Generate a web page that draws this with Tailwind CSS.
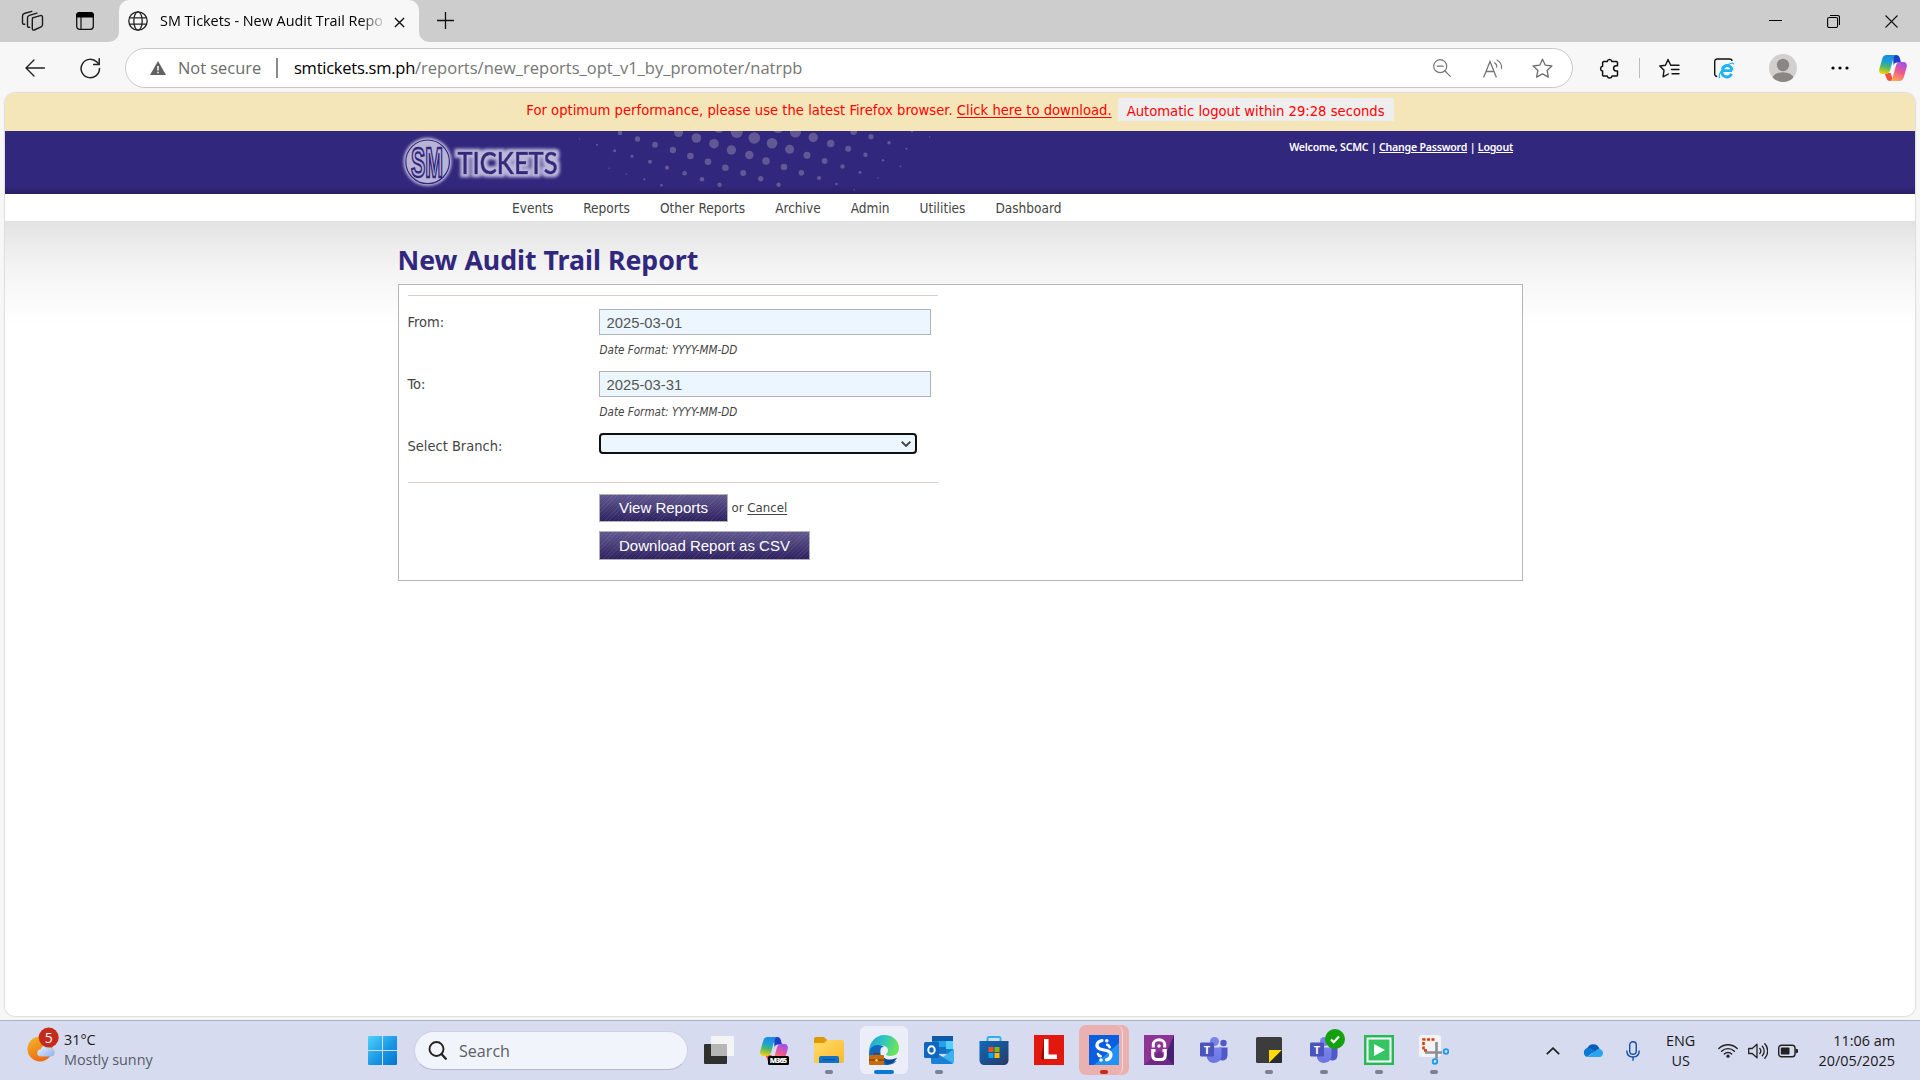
<!DOCTYPE html>
<html lang="en">
<head>
<meta charset="utf-8">
<title>SM Tickets - New Audit Trail Report</title>
<script src="https://cdn.jsdelivr.net/npm/@tailwindcss/browser@4"></script>
</head>
<body class="flex h-[1080px] w-[1920px] flex-col overflow-hidden bg-[#f7f7f7] font-['Open_Sans',sans-serif] text-black">

<svg class="absolute size-0" aria-hidden="true">
  <defs>
    <linearGradient id="cpA" x1="0.5" y1="0" x2="0.3" y2="1"><stop offset="0" stop-color="#1a8be8"/><stop offset=".35" stop-color="#1ba0d8"/><stop offset=".62" stop-color="#4fb868"/><stop offset="1" stop-color="#f6d20c"/></linearGradient>
    <linearGradient id="cpB" x1="0.7" y1="0" x2="0.3" y2="1"><stop offset="0" stop-color="#a050f0"/><stop offset=".5" stop-color="#ee5a8c"/><stop offset="1" stop-color="#ffa850"/></linearGradient>
    <symbol id="copilot" viewBox="0 0 28 26">
      <path d="M14 0h3c2.200 0 3.200 1 3.800 3l1.200 4.500h-4c-2 0-3 1-3.500 3z" fill="#1c3fc8"/>
      <path d="M5.500 18h6l3 8H11c-2 0-3-1-3.600-3z" fill="#f0523c"/>
      <path d="M7.500 0H17c-1.500.5-2.200 2-2.800 4l-3 11c-.8 2.500-2 4-4.500 4H3.500C.800 19-.300 17 .300 14l3-10.500C4 1.200 5.300 0 7.500 0z" fill="url(#cpA)"/>
      <path d="M20.500 26H11c1.500-.5 2.200-2 2.800-4l3-11c.8-2.500 2-4 4.500-4h3.200c2.700 0 3.800 2 3.200 5l-3 10.500c-.7 2.300-2 3.500-4.200 3.500z" fill="url(#cpB)"/>
    </symbol>
    <linearGradient id="tm" x1="0" y1="0" x2="0" y2="1"><stop offset="0" stop-color="#7b83eb"/><stop offset="1" stop-color="#6c74e0"/></linearGradient>
    <symbol id="teams" viewBox="0 0 30 30">
      <circle cx="15.500" cy="6.500" r="4.500" fill="#7b83eb"/><circle cx="24.500" cy="8" r="3.200" fill="#5059c9"/>
      <path d="M20 12.500h8.500v8.500a5 5 0 0 1-8.500 3z" fill="#5059c9"/>
      <path d="M8 12.500h14.500V21a7.500 7.500 0 0 1-14.500 2z" fill="url(#tm)"/>
      <rect x="1" y="7.500" width="14" height="14" rx="1.300" fill="#4b53bc"/>
      <text x="8" y="18.600" font-family="Open Sans, sans-serif" font-weight="700" font-size="11" fill="#fff" text-anchor="middle">T</text>
    </symbol>
  </defs>
</svg>

<!-- tab strip -->
<header class="flex h-[42px] shrink-0 bg-[#cdcdcd]">
  <div class="flex w-[119px] items-center rounded-br-[10px] pl-[21px]">
    <svg class="h-[22px] w-[23px]" viewBox="0 0 23 22" fill="none" stroke="#1b1b1b" stroke-width="1.400" stroke-linejoin="round" stroke-linecap="round">
      <path d="M11.500 7.800l7.800-2.200c1.300-.3 2.200.3 2.200 1.600v7.600c0 1-.5 1.600-1.400 2l-6.900 3.200c-1.100.4-1.900 0-1.900-1.200V9.300c0-.9.200-1.300 1.200-1.600z"/>
      <path d="M8.800 17.200c-1.300.5-2.300 0-2.300-1.300V7.800c0-1.300.6-2 1.800-2.400L16 3.100"/><path d="M3.800 14.200C2.300 14.500 1.500 14 1.500 12.800V5.900c0-1.300.6-2 1.800-2.400L10.800 1.300"/>
    </svg>
    <svg class="ml-[32px] h-[18px] w-[18px]" viewBox="0 0 18 18"><rect x=".700" y=".700" width="16.600" height="16.600" rx="3" fill="none" stroke="#111" stroke-width="1.300"/><path d="M0 5.500V3.500A3.500 3.500 0 0 1 3.500 0h11A3.500 3.500 0 0 1 18 3.500v2z" fill="#000"/><path d="M5 5v12.500" stroke="#111" stroke-width="1.200"/></svg>
  </div>
  <div class="relative flex w-[300px] items-center rounded-t-[10px] bg-[#f7f7f7] pb-[8px] pl-[9px]">
    <svg class="absolute bottom-0 -left-[10px] size-[10px]" viewBox="0 0 10 10"><path d="M10 0v10H0A10 10 0 0 0 10 0z" fill="#f7f7f7"/></svg>
    <svg class="absolute -right-[10px] bottom-0 size-[10px]" viewBox="0 0 10 10"><path d="M0 0v10h10A10 10 0 0 1 0 0z" fill="#f7f7f7"/></svg>
    <svg class="mt-[8px] size-[20px]" viewBox="0 0 20 20" fill="none" stroke="#222" stroke-width="1.300"><circle cx="10" cy="10" r="9.200"/><ellipse cx="10" cy="10" rx="4.200" ry="9.200"/><path d="M1.500 6.800h17M1.500 13.200h17"/></svg>
    <span class="mt-[7px] ml-[12px] w-[223px] overflow-hidden bg-linear-to-r from-black from-90% to-black/15 bg-clip-text text-[14.4px] leading-[20px] whitespace-nowrap text-transparent">SM Tickets - New Audit Trail Repo</span>
    <svg class="mt-[10px] ml-[11px] size-[11px]" viewBox="0 0 12 12" stroke="#111" stroke-width="1.500"><path d="M1 1l10 10M11 1L1 11"/></svg>
  </div>
  <svg class="mt-[12px] ml-[18px] size-[17px]" viewBox="0 0 17 17" stroke="#111" stroke-width="1.300"><path d="M8.500 0v17M0 8.500h17"/></svg>
  <div class="ml-auto flex items-start gap-[45px] pt-[15px] pr-[22px]">
    <svg class="size-[13px]" viewBox="0 0 13 13"><path d="M0 5.500h13" stroke="#000" stroke-width="1"/></svg>
    <svg class="size-[13px]" viewBox="0 0 13 13" fill="none" stroke="#000" stroke-width="1.100"><rect x=".600" y="2.500" width="10" height="10" rx="1.500"/><path d="M3 .500h7.500a2 2 0 0 1 2 2V10"/></svg>
    <svg class="size-[13px]" viewBox="0 0 13 13" stroke="#111" stroke-width="1.100"><path d="M.500.500l12 12M12.500.500l-12 12"/></svg>
  </div>
</header>

<!-- toolbar -->
<div class="flex h-[51px] shrink-0 items-center pt-px">
  <svg class="ml-[25px] h-[18px] w-[20px]" viewBox="0 0 20 18" fill="none" stroke="#222" stroke-width="1.400" stroke-linecap="round" stroke-linejoin="round"><path d="M19.500 9H1M9 1L1 9l8 8"/></svg>
  <svg class="ml-[35px] size-[21px]" viewBox="0 0 21 21" fill="none" stroke="#222" stroke-width="1.500" stroke-linecap="round"><path d="M19.500 10.500a9.200 9.200 0 1 1-2.600-6.400L19 6.200"/><path d="M19.200.800v5.600h-5.600"/></svg>
  <div class="ml-[24px] flex h-[40px] w-[1448px] items-center rounded-full border border-[#c9c9c9] bg-white pl-[24px] text-[16.5px]">
    <svg class="h-[14px] w-[16px]" viewBox="0 0 16 14"><path d="M8 0l8 14H0z" fill="#616161"/><path d="M8 5v4.500M8 10.700v1.600" stroke="#fff" stroke-width="1.500"/></svg>
    <span class="ml-[12px] w-[84px] text-[16.4px] leading-[24px] text-[#6b6b6b]">Not secure</span>
    <i class="ml-[14px] h-[20px] w-[2px] bg-[#8a8a8a]"></i>
    <span class="ml-[16px] leading-[24px] whitespace-nowrap"><span class="tracking-[-0.25px]">smtickets.sm.ph</span><span class="text-[#767676]">/reports/new_reports_opt_v1_by_promoter/natrpb</span></span>
    <svg class="ml-auto size-[18px]" viewBox="0 0 18 18" fill="none" stroke="#767676" stroke-width="1.200" stroke-linecap="round"><circle cx="7.200" cy="7.200" r="6.500"/><path d="M12 12l5.300 5.300M4.200 7.200h6"/></svg>
    <svg class="ml-[32px] h-[19px] w-[20px]" viewBox="0 0 20 19" fill="none" stroke="#767676" stroke-width="1.300" stroke-linecap="round"><path d="M.800 18L7 2.500 13.200 18M3 12.500h8"/><path d="M11.500 3.800a4.500 4.500 0 0 1 2.200 4.500M14 1a8.500 8.500 0 0 1 4.500 8.500" stroke-width="1.100"/></svg>
    <svg class="mr-[19px] ml-[29px] size-[21px]" viewBox="0 0 21 21" fill="none" stroke="#6d6d6d" stroke-width="1.300" stroke-linejoin="round"><path d="M10.500 1.200l2.800 6 6.600.8-4.800 4.500 1.300 6.600-5.900-3.200-5.900 3.200 1.300-6.600L1.100 8l6.600-.8z"/></svg>
  </div>
  <svg class="ml-[26px] size-[21px]" viewBox="0 0 21 21" fill="none" stroke="#111" stroke-width="1.500" stroke-linejoin="round"><path d="M4.500 3.500h3.700a2.400 2.400 0 0 1 4.700 0h4.400c.7 0 1.200.5 1.200 1.200v3h-1.300a2.600 2.600 0 0 0 0 5.200h1.300v4c0 .7-.5 1.200-1.200 1.200H13a2.400 2.400 0 0 1-4.700 0H4.800c-.7 0-1.200-.5-1.200-1.200v-3.800a2.500 2.500 0 0 1 0-4.900V4.500z"/></svg>
  <i class="ml-[19px] h-[20px] w-px bg-[#bdbdbd]"></i>
  <svg class="ml-[19px] size-[21px]" viewBox="0 0 21 21" fill="none" stroke="#111" stroke-width="1.400" stroke-linejoin="round" stroke-linecap="round"><path d="M12.700 7.300h-1L9 1.500 6.500 7.200l-5.700.8 4.200 4.300-.9 6.500 5.200-2.800"/><path d="M13.500 7.300h6.500M12.500 11.500H20M13 15.700h7"/></svg>
  <svg class="ml-[34px] size-[21px]" viewBox="0 0 21 21" fill="none"><path d="M3.200 18.500c-1.500 0-2.500-1-2.500-2.500V3.500C.700 2 1.700 1 3.200 1H15.500c1.500 0 2.500.800 2.500 2" stroke="#111" stroke-width="1.400"/><path d="M18 12.600H7.700M8.200 11.300a5 5.200 0 0 1 9.800 1.300M17.500 15.800a5 5 0 0 1-9.600-2.200" stroke="#1eb4f0" stroke-width="2.900"/><path d="M6 20c-2.500-1 .5-8 7-12.500 3-2.200 6.500-3.500 6.800-1.200" stroke="#1eb4f0" stroke-width="1.200"/></svg>
  <svg class="ml-[34px] size-[28px]" viewBox="0 0 28 28"><clipPath id="av"><circle cx="14" cy="14" r="14"/></clipPath><g clip-path="url(#av)"><rect width="28" height="28" fill="#d2d0ce"/><circle cx="14" cy="11" r="6.200" fill="#8a8684"/><ellipse cx="14" cy="24.500" rx="10.500" ry="6.200" fill="#8a8684"/></g></svg>
  <svg class="ml-[34px] h-[4px] w-[18px]" viewBox="0 0 18 4"><circle cx="2" cy="2" r="1.600"/><circle cx="9" cy="2" r="1.600"/><circle cx="16" cy="2" r="1.600"/></svg>
  <svg class="ml-[30px] h-[26px] w-[28px]"><use href="#copilot"/></svg>
</div>

<!-- page -->
<main class="mx-[5px] flex h-[923px] shrink-0 flex-col overflow-hidden rounded-[10px] bg-white font-['DejaVu_Sans_Condensed','DejaVu_Sans',sans-serif] text-[#444] shadow-[0_0_2px_rgba(0,0,0,0.35)]">
  <div class="flex h-[38px] shrink-0 justify-center bg-[#f4e6b8] text-[14.67px] whitespace-nowrap text-[#ff0000]">
    <p class="pt-[6px] leading-[22px]">For optimum performance, please use the latest Firefox browser. <a class="underline underline-offset-2">Click here to download.</a></p>
    <p class="mt-[5px] ml-[6px] h-[23px] w-[276px] bg-[#eee] text-center leading-[25px]">Automatic logout within 29:28 seconds</p>
  </div>

  <div class="h-[63px] shrink-0 bg-linear-to-b from-[#31277d] from-88% to-[#281f63]">
    <div class="mx-auto flex w-[1124px] justify-between">
      <svg class="h-[63px] w-[560px]" viewBox="398 131 560 63">
        <defs>
          <filter id="glow" x="-20%" y="-40%" width="140%" height="180%"><feGaussianBlur stdDeviation="1.700"/></filter>
          <filter id="halo" x="-10%" y="-40%" width="120%" height="180%">
            <feMorphology in="SourceAlpha" operator="dilate" radius="2.500" result="d"/><feGaussianBlur in="d" stdDeviation="1.600" result="b"/>
            <feFlood flood-color="#bdb8dc"/><feComposite in2="b" operator="in" result="h"/>
            <feMerge><feMergeNode in="h"/><feMergeNode in="SourceGraphic"/></feMerge>
          </filter>
        </defs>
        <g fill="#625994">
          <circle cx="579.600" cy="139" r=".700"/><circle cx="597" cy="144.700" r="1"/><circle cx="614.600" cy="150.700" r="1.500"/><circle cx="632" cy="156.300" r="1.500"/><circle cx="650" cy="161.700" r="2"/><circle cx="667" cy="167.700" r="2.100"/><circle cx="684.600" cy="173.300" r="2.300"/><circle cx="702" cy="179.300" r="2.300"/><circle cx="719.600" cy="184.700" r="2.200"/>
          <circle cx="609" cy="168.300" r=".700"/><circle cx="626.400" cy="174" r=".800"/><circle cx="644.300" cy="179.300" r="1.100"/><circle cx="661.400" cy="185.300" r="1.300"/>
          <circle cx="620" cy="133" r="2.300"/><circle cx="637.500" cy="139" r="2.700"/><circle cx="655" cy="144.700" r="2.900"/><circle cx="672.900" cy="150" r="3.200"/><circle cx="690.400" cy="156" r="3.300"/><circle cx="708" cy="161.700" r="3.300"/><circle cx="725.400" cy="167.700" r="3.300"/><circle cx="743.200" cy="173" r="3"/><circle cx="760.700" cy="178.700" r="2.700"/><circle cx="778.600" cy="184.700" r="2.200"/>
          <circle cx="678.600" cy="132.500" r="4.500"/><circle cx="696.400" cy="138" r="4.800"/><circle cx="714" cy="143.700" r="4.800"/><circle cx="731.400" cy="150" r="4.700"/><circle cx="749.300" cy="155" r="4.200"/><circle cx="766" cy="161" r="3.800"/><circle cx="784" cy="167" r="3.200"/><circle cx="801.400" cy="172.700" r="2.800"/><circle cx="819" cy="178" r="2.100"/><circle cx="836.400" cy="184" r="1.300"/><circle cx="854.300" cy="189.700" r=".700"/>
          <circle cx="719" cy="127.500" r="5.200"/><circle cx="736.800" cy="132" r="6"/><circle cx="754.300" cy="138" r="5.800"/><circle cx="772" cy="143.300" r="5.300"/><circle cx="789.600" cy="149.300" r="4.500"/><circle cx="807" cy="155.300" r="3.500"/><circle cx="824.600" cy="161" r="2.900"/><circle cx="842.500" cy="166.500" r="2.200"/><circle cx="860" cy="172.300" r="1.500"/><circle cx="878" cy="178" r=".800"/>
          <circle cx="778" cy="127.500" r="5.500"/><circle cx="795.400" cy="132" r="5.500"/><circle cx="813.200" cy="137.500" r="4.700"/><circle cx="830.700" cy="143.500" r="3.700"/><circle cx="848.200" cy="148.700" r="3"/><circle cx="865.400" cy="154.700" r="2.200"/><circle cx="883" cy="160.300" r="1.200"/><circle cx="900.400" cy="166.300" r=".900"/>
          <circle cx="853.600" cy="131.500" r="3.400"/><circle cx="871" cy="136.700" r="2.600"/><circle cx="889" cy="142.700" r="1.800"/><circle cx="906.400" cy="148.700" r="1"/><circle cx="912" cy="131.300" r="1.200"/><circle cx="929.600" cy="137" r=".800"/>
        </g>
        <circle cx="427.600" cy="161.800" r="24" fill="#c9c5e0" filter="url(#glow)"/>
        <circle cx="427.600" cy="161.800" r="22.800" fill="#b9b4d6"/>
        <circle cx="427.600" cy="161.800" r="21.800" fill="none" stroke="#31277d" stroke-width="1.200"/>
        <text x="427" y="176.800" font-family="Liberation Sans, sans-serif" font-weight="700" font-size="42" textLength="32" lengthAdjust="spacingAndGlyphs" text-anchor="middle" fill="#b9b4d6" stroke="#31277d" stroke-width="2.300">SM</text>
        <text x="457.500" y="174" font-family="Lato, sans-serif" font-weight="500" font-size="30.500" textLength="100" lengthAdjust="spacingAndGlyphs" fill="#31277d" stroke="#31277d" stroke-width=".700" filter="url(#halo)">TICKETS</text>
      </svg>
      <p class="pt-[6px] pr-[9px] font-['Noto_Sans',sans-serif] text-[10.6px] leading-[20px] font-semibold tracking-[-0.23px] whitespace-nowrap text-white">Welcome, SCMC | <a class="underline">Change Password</a> | <a class="underline">Logout</a></p>
    </div>
  </div>

  <nav class="h-[27px] shrink-0 bg-white">
    <ul class="mx-auto flex w-[1124px] gap-[30px] pt-px pl-[114px] text-[13.55px] leading-[27px] whitespace-nowrap">
      <li>Events</li><li>Reports</li><li>Other Reports</li><li>Archive</li><li>Admin</li><li>Utilities</li><li>Dashboard</li>
    </ul>
  </nav>

  <section class="flex-1 bg-[linear-gradient(#e3e3e3_0,#f4f4f4_48px,#ffffff_104px)]">
    <div class="mx-auto w-[1125px] pt-[23px]">
      <h1 class="font-['Noto_Sans',sans-serif] text-[26.7px] leading-[32px] font-bold text-[#31277d]">New Audit Trail Report</h1>
      <form class="mt-[8px] h-[297px] border border-[#b5b5b5] bg-white px-[9px] pt-[10px]">
        <div class="grid w-[530px] grid-cols-[191px_1fr] border-y border-[#dccfc8] pt-[13px] pb-[22px] text-[14.5px]">
          <label class="leading-[27px]">From:</label>
          <div class="h-[62px]">
            <div class="h-[26px] w-[332px] border border-[#b0b4b8] bg-[#ebf6ff] px-[7px] font-['Liberation_Sans',sans-serif] text-[14.8px] leading-[27px] text-[#555]">2025-03-01</div>
            <p class="mt-[5px] ml-px text-[11.6px] leading-[21px] italic">Date Format: YYYY-MM-DD</p>
          </div>
          <label class="leading-[27px]">To:</label>
          <div class="h-[62px]">
            <div class="h-[26px] w-[332px] border border-[#b0b4b8] bg-[#ebf6ff] px-[7px] font-['Liberation_Sans',sans-serif] text-[14.8px] leading-[27px] text-[#555]">2025-03-31</div>
            <p class="mt-[5px] ml-px text-[11.6px] leading-[21px] italic">Date Format: YYYY-MM-DD</p>
          </div>
          <label class="leading-[27px]">Select Branch:</label>
          <div class="flex h-[21px] w-[318px] items-center justify-end rounded-[4px] border-2 border-[#101010] bg-[#ebf6ff] pr-[4px]">
            <svg class="h-[6px] w-[10px]" viewBox="0 0 10 6" fill="none" stroke="#444" stroke-width="1.900"><path d="M.700.700L5 4.900 9.300.700"/></svg>
          </div>
        </div>
        <div class="flex flex-col items-start gap-[9px] pt-[11px] pl-[191px]">
          <div class="flex items-center text-[13.1px]">
            <button type="button" class="h-[28px] w-[129px] border border-[#b4aeb8] bg-[repeating-linear-gradient(135deg,#ffffff12_0_1px,transparent_1px_3px),linear-gradient(#61578f,#2c215f)] pl-px font-['Liberation_Sans',sans-serif] text-[15px] leading-[26px] text-white">View Reports</button>
            <span class="ml-[4px]">or <a class="underline underline-offset-2">Cancel</a></span>
          </div>
          <button type="button" class="h-[29px] w-[211px] border border-[#b4aeb8] bg-[repeating-linear-gradient(135deg,#ffffff12_0_1px,transparent_1px_3px),linear-gradient(#61578f,#2c215f)] pl-px font-['Liberation_Sans',sans-serif] text-[15px] leading-[26px] text-white">Download Report as CSV</button>
        </div>
      </form>
    </div>
  </section>
</main>

<!-- taskbar -->
<footer class="mt-[4px] flex h-[60px] shrink-0 items-start border-t border-[#aeb1bf] bg-[#d7dbef]">
  <div class="flex w-[368px] pt-[5px] pl-[26px]">
    <svg class="h-[36px] w-[34px]" viewBox="26 1026 34 36">
      <defs><linearGradient id="sun" x1="0" y1="0" x2=".5" y2="1"><stop offset="0" stop-color="#f3b92c"/><stop offset="1" stop-color="#ee6a12"/></linearGradient><linearGradient id="cl" x1="0" y1="0" x2="1" y2="1"><stop offset="0" stop-color="#eaf2fd"/><stop offset="1" stop-color="#8eb2ea"/></linearGradient></defs>
      <circle cx="40" cy="1049" r="12.500" fill="url(#sun)"/><path d="M41 1056.500a3.500 3.500 0 0 1-.5-7 6 6 0 0 1 10.500-1.500 4.300 4.300 0 0 1 0 8.500z" fill="url(#cl)"/>
      <circle cx="48.700" cy="1037.500" r="10" fill="#c42b1c"/><text x="48.700" y="1042.800" font-family="Open Sans, sans-serif" font-size="14" fill="#fff" text-anchor="middle">5</text>
    </svg>
    <p class="ml-[4px] pt-[4px] text-[14.4px] leading-[20px] whitespace-nowrap text-[#1a1a1a]">31°C<br><span class="text-[#555b66]">Mostly sunny</span></p>
  </div>
  <svg class="mt-[15px] size-[29px]" viewBox="0 0 29 29"><defs><linearGradient id="win" gradientUnits="userSpaceOnUse" x1="0" y1="0" x2="29" y2="29"><stop offset="0" stop-color="#4fd2fb"/><stop offset=".55" stop-color="#1a97e4"/><stop offset="1" stop-color="#0673d0"/></linearGradient></defs><path fill="url(#win)" d="M1 0h13v14H0V1a1 1 0 0 1 1-1zM15 0h13a1 1 0 0 1 1 1v13H15zM0 15h14v14H1a1 1 0 0 1-1-1zM15 15h14v13a1 1 0 0 1-1 1H15z"/></svg>
  <div class="mt-[10px] ml-[17px] flex h-[39px] w-[274px] items-center rounded-full border border-b-[#b4b8d2] border-[#cdd1e6] bg-[#f2f4fb] pl-[13px]">
    <svg class="size-[19px]" viewBox="0 0 19 19" fill="none" stroke="#222" stroke-width="1.900" stroke-linecap="round"><circle cx="8.500" cy="8" r="7"/><path d="M13.500 13l4.300 4.700" stroke-width="2.300"/></svg>
    <span class="ml-[12px] text-[16.1px] leading-[24px] text-[#5b5e66]">Search</span>
  </div>

  <div class="ml-[3px] flex h-[59px]">
    <div class="flex w-[55px] justify-center pt-[14px]"><svg class="size-[30px]" viewBox="0 0 30 30"><rect y="9" width="23" height="20" rx="1" fill="#30312f"/><rect x="7" y="1" width="23" height="20" rx="1" fill="#f4f4f4"/><path d="M7 9h16v12H7z" fill="#b5b6b5"/></svg></div>
    <div class="flex w-[55px] justify-center pt-[14px]"><svg class="size-[30px]" viewBox="0 0 30 30"><use href="#copilot" x="0" y="2" width="30" height="26"/><rect x="9" y="21" width="21" height="9" rx="1.500"/><text x="19.500" y="28.300" font-family="Open Sans, sans-serif" font-weight="800" font-size="7.500" textLength="17.500" fill="#fff" text-anchor="middle">M365</text></svg></div>
    <div class="flex w-[55px] flex-col items-center pt-[14px]"><svg class="size-[30px]" viewBox="0 0 30 30"><defs><linearGradient id="fo" x1="0" y1="0" x2="1" y2="1"><stop offset="0" stop-color="#ffdc6a"/><stop offset="1" stop-color="#fcb92c"/></linearGradient></defs><path d="M0 10V4a2 2 0 0 1 2-2h8l3 3v5z" fill="#dd9a05"/><path d="M0 8h10l3-3h15a2 2 0 0 1 2 2v19a2 2 0 0 1-2 2H0z" fill="url(#fo)"/><path d="M5 28v-5a2 2 0 0 1 2-2h16a2 2 0 0 1 2 2v5z" fill="#1173c8"/><path d="M9 24.600h12" stroke="#0b4c92" stroke-width="1.200"/></svg><i class="mt-[5px] h-[4px] w-[8px] rounded-full bg-[#7d808f]"></i></div>
    <div class="flex w-[55px] flex-col items-center pt-[5px]"><div class="flex size-[48px] flex-col items-center rounded-[6px] bg-[#ebeef9] pt-[9px]"><svg class="size-[30px]" viewBox="0 0 30 30"><defs><linearGradient id="e1" x1="0" y1="0" x2="1" y2=".3"><stop offset="0" stop-color="#1da0d8"/><stop offset=".5" stop-color="#2cc5c4"/><stop offset="1" stop-color="#6be35a"/></linearGradient></defs><path d="M0 17C0 8 6 0 15.500 0 24 0 30 6 30 13c0 5-3.500 8-8.500 8-3 0-4.500-1-4.500-2s1.500-1.700 1.500-4-2-4.500-5.500-4.500C6.500 10.500 2 14 0 17z" fill="url(#e1)"/><path d="M0 19c0-5 3.500-9 8.500-9 4 0 7 1.500 8 3.500-3-2-5 1-5 5 0 6 6.500 8.500 11 8.500 2 0 3.500-.5 5-1.200-2 3-6.500 4.200-10.500 4.200C7 30 0 26 0 19z" fill="#1268c0"/><path d="M13 19c1 5 7 7.500 15 3.800-2 4-6 6.700-11 6.700z" fill="#0f4b92"/><circle cx="15.200" cy="15.500" r="3.700" fill="#ebeef9"/><rect y="20" width="15" height="10" rx="1" fill="#c66b10"/><path d="M5 20v-1.500h5V20M0 25h15" stroke="#6e3608" stroke-width="1" fill="none"/><circle cx="7.500" cy="25.300" r="1.200" fill="#ffd36a"/></svg><i class="mt-[5px] h-[4px] w-[20px] rounded-full bg-[#0b78d6]"></i></div></div>
    <div class="flex w-[55px] flex-col items-center pt-[14px]"><svg class="size-[30px]" viewBox="0 0 30 30"><rect x="8" y="1" width="21" height="18" rx="1.500" fill="#1a7fd4"/><path d="M8 1h21v5H8z" fill="#0f5aa8"/><path d="M15 6h7v6h-7z" fill="#28a0ea"/><path d="M22 6h7v8h-7z" fill="#50d0fa"/><path d="M15 12h7v6h-7z" fill="#1470c0"/><path d="M7 15l12 7 11-8v12a3 3 0 0 1-3 3H9a2 2 0 0 1-2-2z" fill="#3ab2ee"/><path d="M7 15l22 13.500-2 .5H9a2 2 0 0 1-2-2z" fill="#1a80d4"/><rect y="7" width="15" height="16" rx="1.500" fill="#1066bd"/><ellipse cx="7.500" cy="15" rx="3.200" ry="3.700" fill="none" stroke="#fff" stroke-width="2"/></svg><i class="mt-[5px] h-[4px] w-[8px] rounded-full bg-[#7d808f]"></i></div>
    <div class="flex w-[55px] justify-center pt-[14px]"><svg class="size-[30px]" viewBox="0 0 30 30"><defs><linearGradient id="st" x1="0" y1="0" x2="1" y2="1"><stop offset="0" stop-color="#0f6abb"/><stop offset="1" stop-color="#263a66"/></linearGradient></defs><path d="M8.500 7V3.500C8.500 2.400 9 2 10 2h10c1 0 1.500.4 1.500 1.500V7" fill="none" stroke="#27b4ea" stroke-width="1.900"/><path d="M.500 6h29v19c0 3-2 5-5 5h-19c-3 0-5-2-5-5z" fill="url(#st)"/><path d="M9.500 12h5v5h-5z" fill="#f25022"/><path d="M15.500 12h5v5h-5z" fill="#7fba00"/><path d="M9.500 18h5v5h-5z" fill="#00a4ef"/><path d="M15.500 18h5v5h-5z" fill="#ffb900"/></svg></div>
    <div class="flex w-[55px] justify-center pt-[14px]"><svg class="size-[30px]" viewBox="0 0 30 30"><path d="M0 0h30v30H0z" fill="#e2170d"/><path d="M10 4v21l-3-1z" fill="#8d0f08"/><path d="M10 4h4.500v15.500H23V24H10z" fill="#fff"/></svg></div>
    <div class="relative w-[55px] pt-[4px] pl-[2.5px]"><i class="absolute top-[4px] left-[38px] h-[50px] w-[15px] rounded-r-[7px] bg-[#e9b1b0]"></i><div class="relative flex h-[50px] w-[44px] flex-col items-start rounded-[7px] border-r border-[#f6dcdc] bg-[#e9b1b0] pt-[10px] pl-[10px]"><svg class="size-[30px]" viewBox="0 0 30 30"><path d="M0 0h30v30H0z" fill="#0a5fe0"/><path d="M30 8v22H5z" fill="#1f93f5"/><g fill="none" stroke="#fff" stroke-width="3.200" stroke-linecap="round"><path d="M13 5.500c-5.500 1-7 6.500-2 8.500l8 2c5 2 3 8-1.500 8.800"/><path d="M18.200 9.800c1.300.3 2 1.200 2.500 2.400M9 19c.5 1.300 1.300 2 2.700 2.300" stroke-width="2.600"/></g><circle cx="17.800" cy="5.700" r="1.800" fill="#fff"/><circle cx="12" cy="25" r="1.800" fill="#fff"/></svg><i class="mt-[5px] ml-[11px] h-[4px] w-[8px] rounded-full bg-[#c42b1c]"></i></div></div>
    <div class="flex w-[55px] justify-center pt-[14px]"><svg class="size-[30px]" viewBox="0 0 30 30"><path d="M0 0h30v30H0z" fill="#8f3497"/><path d="M30 0v30H17l13-30z" fill="#47206f"/><path d="M0 30l15-14 15 14z" fill="#6c2a86"/><g fill="none" stroke="#fff" stroke-width="3"><path d="M9.300 12.500V9.500a5.700 4.700 0 0 1 11.400 0v3"/><path d="M11.500 15.500H8.700V20c0 2.800 1.800 4.500 4.300 4.500h4c2.500 0 4.300-1.700 4.300-4.500v-4.500h-2.800"/></g><circle cx="15" cy="11" r="1.700" fill="#fff"/></svg></div>
    <div class="flex w-[55px] justify-center pt-[14px]"><svg class="size-[30px]"><use href="#teams"/></svg></div>
    <div class="flex w-[55px] flex-col items-center pt-[14px]"><svg class="size-[30px]" viewBox="0 0 30 30"><rect x="2" y="2" width="26" height="26" rx="1.500" fill="#3c3c3c"/><path d="M15 15h13L15 28z" fill="#ffd90a"/><path d="M28 15v11.500a1.500 1.500 0 0 1-1.500 1.500H15z" fill="#2b2b2b"/></svg><i class="mt-[5px] h-[4px] w-[8px] rounded-full bg-[#7d808f]"></i></div>
    <div class="relative flex w-[55px] flex-col items-center pt-[14px]"><svg class="size-[30px]"><use href="#teams"/></svg><svg class="absolute top-[8px] left-[29px] size-[20px]" viewBox="0 0 20 20"><circle cx="10" cy="10" r="10" fill="#13a10e"/><path d="M6 10.500l2.700 2.700L14 7.500" fill="none" stroke="#fff" stroke-width="2.200"/></svg><i class="mt-[5px] h-[4px] w-[8px] rounded-full bg-[#7d808f]"></i></div>
    <div class="flex w-[55px] flex-col items-center pt-[14px]"><svg class="size-[30px]" viewBox="0 0 30 30"><path d="M0 0h30v30H0z" fill="#27b956"/><path d="M3.500 3.500h23v23h-23z" fill="#34c562" stroke="#fff" stroke-width="2"/><path d="M10 9l11 6-11 6z" fill="#fff"/></svg><i class="mt-[5px] h-[4px] w-[8px] rounded-full bg-[#7d808f]"></i></div>
    <div class="flex w-[55px] flex-col items-center pt-[14px]"><svg class="size-[30px]" viewBox="0 0 30 30"><rect width="22" height="22" rx="2.500" fill="#f3f3f5"/><path d="M15.500 4.500H4.500v11h4" fill="none" stroke="#d83b01" stroke-width="2.600" stroke-dasharray="3 1.500"/><path d="M17.500 7v16.500M6 17.500h17" stroke="#8a8d92" stroke-width="2.600" fill="none"/><circle cx="27" cy="16.500" r="2.300" fill="none" stroke="#1a9be8" stroke-width="1.800"/><circle cx="16" cy="26.500" r="2.300" fill="none" stroke="#1a9be8" stroke-width="1.800"/></svg><i class="mt-[5px] h-[4px] w-[8px] rounded-full bg-[#7d808f]"></i></div>
  </div>

  <div class="ml-auto flex h-[59px] items-center pr-[25px] text-[14.4px] leading-[20px] text-[#1a1a1a]">
    <svg class="h-[8px] w-[14px]" viewBox="0 0 14 8" fill="none" stroke="#222" stroke-width="1.800"><path d="M.800 7.200L7 1.200l6.200 6"/></svg>
    <svg class="ml-[23px] h-[13px] w-[20px]" viewBox="0 0 20 13"><path d="M4 5a6.500 6.500 0 0 1 12.500 0L10 9z" fill="#0a5cb8"/><path d="M4.500 4a4.700 4.700 0 0 0-.5 9l8-6c-2-2-4.500-3.500-7.500-3z" fill="#0b78d6"/><path d="M4.500 13L14 5.500c3-1.500 6 .8 6 3.700 0 2.300-1.700 3.800-3.800 3.800z" fill="#2aa4ee"/></svg>
    <svg class="ml-[23px] h-[20px] w-[14px]" viewBox="0 0 14 20" fill="none" stroke="#1450a8" stroke-width="1.400"><rect x="3.700" y=".800" width="6.600" height="12.400" rx="3.300"/><path d="M.800 9.500c0 4 2.500 6.500 6.200 6.500s6.200-2.500 6.200-6.500M7 16v3.800"/></svg>
    <p class="ml-[26px] w-[30px] pt-px text-center">ENG<br>US</p>
    <svg class="ml-[22px] h-[15px] w-[20px]" viewBox="0 0 20 15" fill="none" stroke="#222" stroke-width="1.400" stroke-linecap="round"><path d="M.800 5.500a13 13 0 0 1 18.400 0M3.600 8.300a9 9 0 0 1 12.800 0M6.300 11a5.200 5.200 0 0 1 7.400 0"/><circle cx="10" cy="13.200" r="1.600" fill="#222" stroke="none"/></svg>
    <svg class="ml-[10px] h-[18px] w-[20px]" viewBox="0 0 20 18" fill="none" stroke="#222" stroke-width="1.300" stroke-linecap="round" stroke-linejoin="round"><path d="M.700 6.500v5h3.500L9 15.800V2.200L4.200 6.500z"/><path d="M11.800 6.500a3.800 3.800 0 0 1 0 5M14.300 4.200a7 7 0 0 1 0 9.600M16.800 1.800a10.500 10.500 0 0 1 0 14.400"/></svg>
    <svg class="ml-[10px] h-[14px] w-[20px]" viewBox="0 0 20 14"><rect x=".700" y="1.200" width="16.300" height="11.600" rx="2.800" fill="none" stroke="#222" stroke-width="1.400"/><rect x="2.800" y="3.400" width="8.700" height="7.200" rx="1" fill="#222"/><path d="M17.500 4.500l2.500 1v3l-2.500 1z" fill="#222"/></svg>
    <p class="ml-[21px] text-right whitespace-nowrap">11:06 am<br>20/05/2025</p>
  </div>
</footer>
</body>
</html>
